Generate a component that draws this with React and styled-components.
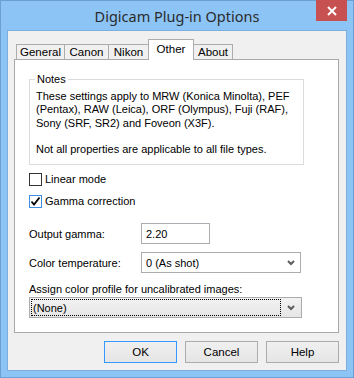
import React from "react";
import styled, { createGlobalStyle } from "styled-components";

const Global = createGlobalStyle`
  html, body { margin: 0; padding: 0; }
  body {
    font-family: "Liberation Sans", Arial, sans-serif;
    font-size: 11px;
    color: #000;
  }
`;

const Frame = styled.div`
  position: relative;
  width: 354px;
  height: 378px;
  box-sizing: border-box;
  background: #8cc4f6;
  border: 1px solid #6c9fd2;
  padding: 0 7px 7px;
  display: flex;
  flex-direction: column;
`;

const TitleBar = styled.div`
  height: 30px;
  display: flex;
  align-items: center;
  justify-content: center;
  font-family: "Noto Sans", sans-serif;
  font-size: 14.5px;
  color: #2b2b2b;
  padding-bottom: 1px;
  box-sizing: border-box;
`;

const CloseButton = styled.div`
  position: absolute;
  top: -1px;
  right: 6px;
  width: 31px;
  height: 21px;
  background: #c75050;
  display: flex;
  align-items: center;
  justify-content: center;
`;

const Client = styled.div`
  flex: 1;
  background: #f0f0f0;
  box-shadow: 0 0 0 1px #7cafe0;
  padding: 8px 7px 7px 6px;
  display: flex;
  flex-direction: column;
`;

const TabRow = styled.div`
  display: flex;
  align-items: flex-end;
  height: 20px;
  padding-left: 2px;
`;

const Tab = styled.div`
  position: relative;
  z-index: ${(p) => (p.$active ? 2 : 1)};
  box-sizing: border-box;
  width: ${(p) => p.$w}px;
  height: ${(p) => (p.$active ? 21 : 15)}px;
  margin-left: -1px;
  margin-bottom: ${(p) => (p.$active ? -1 : 0)}px;
  border: 1px solid #acacac;
  border-bottom: none;
  background: ${(p) => (p.$active ? "#fff" : "#f0f0f0")};
  display: flex;
  align-items: ${(p) => (p.$active ? "flex-start" : "center")};
  padding-top: ${(p) => (p.$active ? 2 : 0)}px;
  justify-content: center;
  font-size: 11.5px;
  line-height: 14px;
  &:first-child { margin-left: 0; }
`;

const Panel = styled.div`
  position: relative;
  z-index: 1;
  flex: 1;
  background: #fff;
  border: 1px solid #a9a9a9;
  padding: 0 0 0 14px;
  display: flex;
  flex-direction: column;
`;

const GroupBox = styled.div`
  position: relative;
  width: 275px;
  box-sizing: border-box;
  margin-top: 19px;
  border: 1px solid #dcdcdc;
  padding: 10px 6px 8px;
  white-space: nowrap;
`;

const Legend = styled.span`
  position: absolute;
  top: -8px;
  left: 5px;
  padding: 0 2px;
  background: #fff;
  line-height: 15px;
`;

const NoteLine = styled.div`
  line-height: 13.3px;
  margin-bottom: ${(p) => (p.$gap ? 13.3 : 0)}px;
`;

const CheckRow = styled.label`
  display: flex;
  align-items: center;
  gap: 3px;
  height: 13px;
  margin-top: ${(p) => p.$top}px;
  line-height: 13px;
`;

const Box = styled.span`
  width: 13px;
  height: 13px;
  box-sizing: border-box;
  border: 1px solid ${(p) => (p.$checked ? "#3c8fe3" : "#333")};
  background: #fff;
  display: flex;
  align-items: center;
  justify-content: center;
`;

const FieldRow = styled.div`
  display: flex;
  align-items: center;
  margin-top: ${(p) => p.$top}px;
`;

const FieldLabel = styled.span`
  width: 112px;
`;

const TextInput = styled.div`
  width: 69px;
  height: 21px;
  box-sizing: border-box;
  border: 1px solid #abadb3;
  padding-left: 4px;
  display: flex;
  align-items: center;
`;

const Select = styled.div`
  width: ${(p) => p.$w}px;
  height: 21px;
  box-sizing: border-box;
  border: 1px solid #acacac;
  background: ${(p) =>
    p.$focused ? "linear-gradient(#f2f2f2, #e6e6e6)" : "#fff"};
  display: flex;
  align-items: center;
  padding: ${(p) => (p.$focused ? "1px" : "0 0 0 4px")};
`;

const SelectValue = styled.span`
  flex: 1;
  align-self: stretch;
  display: flex;
  align-items: center;
  box-sizing: border-box;
  padding-left: ${(p) => (p.$focused ? 1 : 0)}px;
  border: ${(p) => (p.$focused ? "1px dotted #000" : "none")};
`;

const Arrow = styled.span`
  width: 19px;
  display: flex;
  justify-content: center;
`;

const CaptionLine = styled.div`
  margin-top: 9px;
  line-height: 15px;
`;

const ButtonRow = styled.div`
  display: flex;
  justify-content: flex-end;
  gap: 8px;
  margin-top: 8px;
`;

const Button = styled.div`
  width: 73px;
  height: 22px;
  box-sizing: border-box;
  border: 1px solid ${(p) => (p.$default ? "#3399ff" : "#acacac")};
  background: linear-gradient(#f0f0f0, #e5e5e5);
  display: flex;
  align-items: center;
  justify-content: center;
  font-size: 11.5px;
`;

const Chevron = () => (
  <svg width="8" height="6" viewBox="0 0 8 6">
    <path d="M1 1 L4 4 L7 1" fill="none" stroke="#5c5c5c" strokeWidth="2" />
  </svg>
);

const Check = () => (
  <svg width="11" height="11" viewBox="0 0 11 11">
    <path d="M1.5 5.5 L4 8.5 L9.5 1.5" fill="none" stroke="#000" strokeWidth="1.8" />
  </svg>
);

const tabs = [
  { name: "General", w: 49 },
  { name: "Canon", w: 45 },
  { name: "Nikon", w: 41 },
  { name: "Other", w: 46, active: true },
  { name: "About", w: 40 },
];

export default function App() {
  return (
    <>
      <Global />
      <Frame>
        <TitleBar>Digicam Plug-in Options</TitleBar>
        <CloseButton>
          <svg width="10" height="10" viewBox="0 0 10 10">
            <path d="M1 1 L9 9 M9 1 L1 9" stroke="#fff" strokeWidth="2" />
          </svg>
        </CloseButton>
        <Client>
          <TabRow>
            {tabs.map((t) => (
              <Tab key={t.name} $w={t.w} $active={t.active}>
                {t.name}
              </Tab>
            ))}
          </TabRow>
          <Panel>
            <GroupBox>
              <Legend>Notes</Legend>
              <NoteLine>These settings apply to MRW (Konica Minolta), PEF</NoteLine>
              <NoteLine>(Pentax), RAW (Leica), ORF (Olympus), Fuji (RAF),</NoteLine>
              <NoteLine $gap>Sony (SRF, SR2) and Foveon (X3F).</NoteLine>
              <NoteLine>Not all properties are applicable to all file types.</NoteLine>
            </GroupBox>
            <CheckRow $top={8}>
              <Box />
              Linear mode
            </CheckRow>
            <CheckRow $top={9}>
              <Box $checked>
                <Check />
              </Box>
              Gamma correction
            </CheckRow>
            <FieldRow $top={15}>
              <FieldLabel>Output gamma:</FieldLabel>
              <TextInput>2.20</TextInput>
            </FieldRow>
            <FieldRow $top={8}>
              <FieldLabel>Color temperature:</FieldLabel>
              <Select $w={160}>
                <SelectValue>0 (As shot)</SelectValue>
                <Arrow>
                  <Chevron />
                </Arrow>
              </Select>
            </FieldRow>
            <CaptionLine>Assign color profile for uncalibrated images:</CaptionLine>
            <Select $w={273} $focused>
              <SelectValue $focused>(None)</SelectValue>
              <Arrow>
                <Chevron />
              </Arrow>
            </Select>
          </Panel>
          <ButtonRow>
            <Button $default>OK</Button>
            <Button>Cancel</Button>
            <Button>Help</Button>
          </ButtonRow>
        </Client>
      </Frame>
    </>
  );
}
